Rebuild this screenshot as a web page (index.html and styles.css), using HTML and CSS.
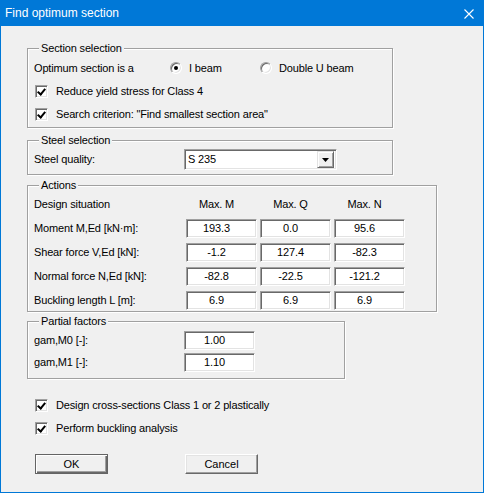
FILE: index.html
```html
<!doctype html>
<html lang="en">

<head>
    <meta charset="utf-8">
    <title>Find optimum section</title>
    <link rel="stylesheet" href="styles.css">
</head>

<body>
    <div class="window">
        <div class="titlebar">
            <span class="title">Find optimum section</span>
            <svg class="close" width="10" height="10" viewBox="0 0 10 10">
                <path d="M0.5 0.5 L9.5 9.5 M9.5 0.5 L0.5 9.5" stroke="#fff" stroke-width="1.1" fill="none" />
            </svg>
        </div>
        <div class="dialog">
            <!-- Section selection -->
            <fieldset class="group group-section">
                <legend>Section selection</legend>
                <div class="row">
                    <span class="label-opt">Optimum section is a</span>
                    <label class="radio"><span class="radio-box checked"></span>I beam</label>
                    <label class="radio radio-2"><span class="radio-box"></span>Double U beam</label>
                </div>
                <div class="row">
                    <label class="check"><span class="check-box checked"></span>Reduce yield stress for Class 4</label>
                </div>
                <div class="row">
                    <label class="check"><span class="check-box checked"></span>Search criterion: "Find smallest section area"</label>
                </div>
            </fieldset>

            <!-- Steel selection -->
            <fieldset class="group group-steel">
                <legend>Steel selection</legend>
                <div class="row row-combo">
                    <span class="label-steel">Steel quality:</span>
                    <div class="combo">
                        <span class="combo-text">S 235</span>
                        <span class="combo-btn">
                            <svg width="7" height="4" viewBox="0 0 7 4"><path d="M0 0 H7 L3.5 4 Z" fill="#000" /></svg>
                        </span>
                    </div>
                </div>
            </fieldset>

            <!-- Actions -->
            <fieldset class="group group-actions">
                <legend>Actions</legend>
                <div class="grid-row">
                    <span class="cell-label">Design situation</span>
                    <span class="cell-head">Max. M</span>
                    <span class="cell-head">Max. Q</span>
                    <span class="cell-head">Max. N</span>
                </div>
                <div class="grid-row">
                    <span class="cell-label">Moment M,Ed [kN·m]:</span>
                    <span class="edit">193.3</span>
                    <span class="edit">0.0</span>
                    <span class="edit">95.6</span>
                </div>
                <div class="grid-row">
                    <span class="cell-label">Shear force V,Ed [kN]:</span>
                    <span class="edit">-1.2</span>
                    <span class="edit">127.4</span>
                    <span class="edit">-82.3</span>
                </div>
                <div class="grid-row">
                    <span class="cell-label">Normal force N,Ed [kN]:</span>
                    <span class="edit">-82.8</span>
                    <span class="edit">-22.5</span>
                    <span class="edit">-121.2</span>
                </div>
                <div class="grid-row">
                    <span class="cell-label">Buckling length L [m]:</span>
                    <span class="edit">6.9</span>
                    <span class="edit">6.9</span>
                    <span class="edit">6.9</span>
                </div>
            </fieldset>

            <!-- Partial factors -->
            <fieldset class="group group-factors">
                <legend>Partial factors</legend>
                <div class="factor-row">
                    <span class="factor-label">gam,M0 [-]:</span>
                    <span class="edit">1.00</span>
                </div>
                <div class="factor-row">
                    <span class="factor-label">gam,M1 [-]:</span>
                    <span class="edit">1.10</span>
                </div>
            </fieldset>

            <div class="options">
                <div class="row">
                    <label class="check"><span class="check-box checked"></span>Design cross-sections Class 1 or 2 plastically</label>
                </div>
                <div class="row">
                    <label class="check"><span class="check-box checked"></span>Perform buckling analysis</label>
                </div>
            </div>

            <div class="buttons">
                <button class="btn btn-default">OK</button>
                <button class="btn">Cancel</button>
            </div>
        </div>
    </div>
</body>

</html>
```

FILE: styles.css
```css
html,
body {
    margin: 0;
    background-color: #ffffff;
    font-family: "Liberation Sans", Arial, sans-serif;
    font-size: 11px;
    line-height: 13px;
    letter-spacing: -0.15px;
    color: #000000;
}

.window {
    width: 484px;
    height: 493px;
    box-sizing: border-box;
    border: 1px solid #0078d7;
    background-color: #f0f0f0;
}

.titlebar {
    height: 25px;
    background-color: #0078d7;
    color: #ffffff;
    display: flex;
    align-items: center;
    justify-content: space-between;
    padding: 0 9px 0 4px;
    font-size: 12px;
    letter-spacing: 0;
}

.close {
    display: block;
}

.dialog {
    padding: 16px 0 0 26px;
    white-space: nowrap;
}

/* group boxes */
.group {
    box-sizing: border-box;
    margin: 0;
    padding: 3px 6px 3px 6px;
    border: 1px solid #a0a0a0;
    box-shadow: inset 1px 1px #ffffff, 1px 1px #ffffff;
}

.group legend {
    margin-left: 5px;
    padding: 0 2px;
    background-color: #f0f0f0;
    line-height: 13px;
}

.group-section {
    width: 366px;
}

.group-steel {
    width: 366px;
    margin-top: 6px;
    padding-top: 2px;
    padding-bottom: 4px;
}

.group-actions {
    width: 410px;
    margin-top: 4px;
    padding-bottom: 1px;
}

.group-factors {
    width: 318px;
    margin-top: 3px;
    padding-bottom: 6px;
}

.row {
    height: 20px;
    display: flex;
    align-items: center;
}

.group-section .row + .row,
.options .row + .row {
    margin-top: 3px;
}

.label-opt {
    width: 136px;
}

.radio,
.check {
    display: flex;
    align-items: center;
}

.radio {
    width: 90px;
}

.radio-2 {
    width: auto;
}

.radio-box {
    width: 12px;
    height: 12px;
    box-sizing: border-box;
    border-radius: 50%;
    background-color: #ffffff;
    border: 1px solid;
    border-color: #a0a0a0 #ffffff #ffffff #a0a0a0;
    box-shadow: inset 1px 1px #696969, inset -1px -1px #e3e3e3;
    margin-right: 7px;
    display: flex;
    align-items: center;
    justify-content: center;
}

.radio-box.checked::after {
    content: "";
    width: 4px;
    height: 4px;
    border-radius: 50%;
    background-color: #000000;
}

.check-box {
    width: 13px;
    height: 13px;
    box-sizing: border-box;
    margin-left: 1px;
    margin-right: 8px;
    background-color: #ffffff;
    border: 1px solid;
    border-color: #a0a0a0 #ffffff #ffffff #a0a0a0;
    box-shadow: inset 1px 1px #696969, inset -1px -1px #e3e3e3;
    position: relative;
}

.check-box.checked::after {
    content: "";
    position: absolute;
    left: 3px;
    top: 1px;
    width: 3px;
    height: 6px;
    border: solid #000000;
    border-width: 0 2px 2px 0;
    transform: rotate(40deg);
}

/* steel combo */
.row-combo {
    height: 21px;
}

.label-steel {
    width: 150px;
}

.combo {
    width: 153px;
    height: 21px;
    box-sizing: border-box;
    display: flex;
    align-items: center;
    background-color: #ffffff;
    border: 1px solid;
    border-color: #a0a0a0 #ffffff #ffffff #a0a0a0;
    box-shadow: inset 1px 1px #696969, inset -1px -1px #e3e3e3;
    padding: 2px;
}

.combo-text {
    flex: 1;
    padding-left: 1px;
}

.combo-btn {
    width: 17px;
    height: 17px;
    box-sizing: border-box;
    display: flex;
    align-items: center;
    justify-content: center;
    background-color: #f0f0f0;
    border: 1px solid;
    border-color: #e3e3e3 #696969 #696969 #e3e3e3;
    box-shadow: inset 1px 1px #ffffff, inset -1px -1px #a0a0a0;
}

.combo-btn svg {
    display: block;
}

/* actions grid */
.grid-row {
    height: 19px;
    display: flex;
    align-items: center;
}

.grid-row + .grid-row {
    margin-top: 5px;
}

.cell-label {
    width: 152px;
}

.cell-head {
    width: 71px;
    margin-right: 3px;
    padding-right: 10px;
    box-sizing: border-box;
    text-align: center;
}

.edit {
    width: 71px;
    height: 19px;
    box-sizing: border-box;
    margin-right: 3px;
    padding-right: 10px;
    display: flex;
    align-items: center;
    justify-content: center;
    background-color: #ffffff;
    border: 1px solid;
    border-color: #a0a0a0 #ffffff #ffffff #a0a0a0;
    box-shadow: inset 1px 1px #696969, inset -1px -1px #e3e3e3;
}

.factor-row {
    height: 19px;
    display: flex;
    align-items: center;
}

.factor-row + .factor-row {
    margin-top: 3px;
}

.factor-label {
    width: 150px;
}

/* bottom */
.options {
    margin-top: 16px;
    padding-left: 7px;
}

.buttons {
    margin-top: 16px;
    padding-left: 8px;
    display: flex;
    gap: 77px;
}

.btn {
    width: 73px;
    height: 20px;
    box-sizing: border-box;
    padding: 0;
    font: inherit;
    color: #000000;
    background-color: #f0f0f0;
    border: 1px solid;
    border-color: #ffffff #696969 #696969 #ffffff;
    box-shadow: inset -1px -1px #a0a0a0, inset 1px 1px #e3e3e3;
}

.btn-default {
    border: 1px solid #646464;
    box-shadow: inset 1px 1px #ffffff, inset -1px -1px #696969, inset -2px -2px #a0a0a0;
}
```
